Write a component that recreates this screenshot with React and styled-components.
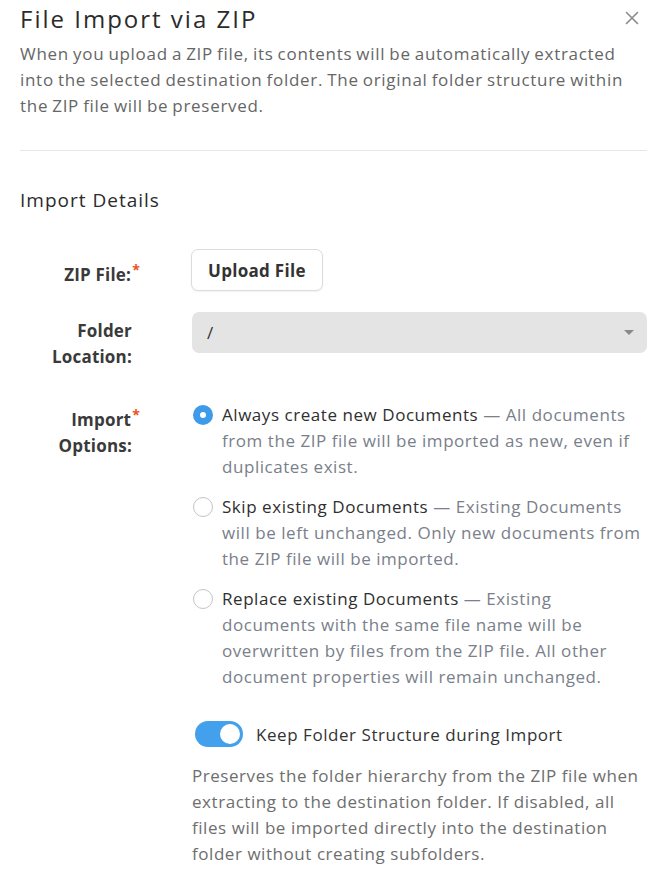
import styled, { createGlobalStyle } from "styled-components";

const GlobalStyle = createGlobalStyle`
  html, body {
    margin: 0;
    padding: 0;
    background: #ffffff;
  }
  body {
    font-family: "Open Sans", "Noto Sans", sans-serif;
    color: #333333;
  }
`;

const Dialog = styled.div`
  width: 671px;
  box-sizing: border-box;
  padding: 4px 24px 0 20px;
`;

const Header = styled.div`
  display: flex;
  align-items: center;
  justify-content: space-between;
  height: 28px;
`;

const Title = styled.h2`
  margin: 0;
  font-size: 24px;
  letter-spacing: 2px;
  font-weight: 400;
  color: #2b2b2b;
`;

const CloseButton = styled.button`
  border: none;
  background: none;
  padding: 0;
  width: 20px;
  height: 20px;
  display: flex;
  align-items: center;
  justify-content: center;
  margin-right: 5px;
  cursor: pointer;
`;

const Intro = styled.p`
  margin: 9px 0 0;
  font-size: 17px;
  letter-spacing: 0.7px;
  word-spacing: -1px;
  line-height: 26px;
  color: #666666;
`;

const Divider = styled.hr`
  border: none;
  border-top: 1px solid #e6e6e6;
  margin: 31px 0 0;
`;

const SectionTitle = styled.h3`
  margin: 36px 0 0;
  font-size: 19px;
  letter-spacing: 1px;
  font-weight: 400;
  color: #2b2b2b;
`;

const Form = styled.div`
  display: grid;
  grid-template-columns: 112px 1fr;
  column-gap: 60px;
  margin-top: 36px;
  font-size: 17px;
  letter-spacing: 0.55px;
`;

const Label = styled.div`
  text-align: right;
  font-weight: 700;
  line-height: 26px;
  color: #3a3a3a;
  letter-spacing: 0.2px;
  padding-top: ${(p) => p.$top || 0}px;
  margin-bottom: ${(p) => p.$bottom || 0}px;
`;

const Required = styled.span`
  color: #e8531f;
  font-size: 14px;
  vertical-align: 6px;
  margin-left: 1px;
  margin-right: -8px;
`;

const Cell = styled.div`
  margin-bottom: ${(p) => p.$bottom || 0}px;
`;

const UploadButton = styled.button`
  font-family: inherit;
  font-size: 17px;
  letter-spacing: 0.3px;
  font-weight: 700;
  color: #333333;
  background: #ffffff;
  border: 1px solid #dcdcdc;
  border-radius: 7px;
  height: 42px;
  padding: 0 16px;
  margin-left: -1px;
  box-shadow: 0 1px 2px rgba(0, 0, 0, 0.06);
  cursor: pointer;
`;

const Select = styled.div`
  height: 41px;
  border-radius: 7px;
  background: #e4e4e4;
  display: flex;
  align-items: center;
  justify-content: space-between;
  padding: 0 13px 0 15px;
  color: #333333;
`;

const Caret = styled.span`
  width: 0;
  height: 0;
  border-left: 5px solid transparent;
  border-right: 5px solid transparent;
  border-top: 5px solid #8a8a8a;
`;

const OptionList = styled.div`
  display: flex;
  flex-direction: column;
  gap: 14px;
`;

const Option = styled.label`
  display: flex;
  align-items: flex-start;
  gap: 9px;
  line-height: 26px;
  cursor: pointer;
`;

const Radio = styled.span`
  flex: none;
  width: 20px;
  height: 20px;
  margin-top: 3px;
  margin-left: 1px;
  box-sizing: border-box;
  border-radius: 50%;
  border: ${(p) => (p.$checked ? "none" : "1.5px solid #c4c4c4")};
  background: ${(p) => (p.$checked ? "#3d9be9" : "#ffffff")};
  display: flex;
  align-items: center;
  justify-content: center;
  &::after {
    content: "";
    display: ${(p) => (p.$checked ? "block" : "none")};
    width: 6px;
    height: 6px;
    border-radius: 50%;
    background: #ffffff;
  }
`;

const OptionTitle = styled.span`
  color: #2f2f2f;
`;

const OptionDesc = styled.span`
  color: #7a808a;
`;

const ToggleRow = styled.div`
  display: flex;
  align-items: center;
  gap: 13px;
  margin-top: 31px;
  padding-left: 3px;
  color: #333333;
`;

const Switch = styled.span`
  flex: none;
  width: 48px;
  height: 26px;
  border-radius: 13px;
  background: ${(p) => (p.$on ? "#42a0ec" : "#cccccc")};
  display: flex;
  align-items: center;
  justify-content: ${(p) => (p.$on ? "flex-end" : "flex-start")};
  padding: 0 3px;
  box-sizing: border-box;
  &::after {
    content: "";
    width: 20px;
    height: 20px;
    border-radius: 50%;
    background: #ffffff;
  }
`;

const Help = styled.p`
  margin: 16px 0 0;
  line-height: 26px;
  color: #6e6e6e;
`;

const options = [
  {
    title: "Always create new Documents",
    desc: "All documents from the ZIP file will be imported as new, even if duplicates exist.",
    checked: true,
  },
  {
    title: "Skip existing Documents",
    desc: "Existing Documents will be left unchanged. Only new documents from the ZIP file will be imported.",
  },
  {
    title: "Replace existing Documents",
    desc: "Existing documents with the same file name will be overwritten by files from the ZIP file. All other document properties will remain unchanged.",
  },
];

function CloseIcon() {
  return (
    <svg width="14" height="14" viewBox="0 0 14 14">
      <path
        d="M1.5 1.5 L12.5 12.5 M12.5 1.5 L1.5 12.5"
        stroke="#8a8a8a"
        strokeWidth="1.6"
        strokeLinecap="round"
      />
    </svg>
  );
}

export default function App() {
  return (
    <>
      <GlobalStyle />
      <Dialog>
        <Header>
          <Title>File Import via ZIP</Title>
          <CloseButton aria-label="Close">
            <CloseIcon />
          </CloseButton>
        </Header>
        <Intro>
          When you upload a ZIP file, its contents will be automatically
          extracted into the selected destination folder. The original folder
          structure within the ZIP file will be preserved.
        </Intro>
        <Divider />
        <SectionTitle>Import Details</SectionTitle>
        <Form>
          <Label $top={8} $bottom={21}>
            ZIP File:<Required>*</Required>
          </Label>
          <Cell $bottom={21}>
            <UploadButton>Upload File</UploadButton>
          </Cell>

          <Label $top={6} $bottom={32}>
            Folder
            <br />
            Location:
          </Label>
          <Cell>
            <Select>
              <span>/</span>
              <Caret />
            </Select>
          </Cell>

          <Label>
            Import<Required>*</Required>
            <br />
            Options:
          </Label>
          <Cell>
            <OptionList>
              {options.map((o) => (
                <Option key={o.title}>
                  <Radio $checked={o.checked} />
                  <span>
                    <OptionTitle>{o.title}</OptionTitle>
                    <OptionDesc> — {o.desc}</OptionDesc>
                  </span>
                </Option>
              ))}
            </OptionList>
            <ToggleRow>
              <Switch $on />
              Keep Folder Structure during Import
            </ToggleRow>
            <Help>
              Preserves the folder hierarchy from the ZIP file when extracting
              to the destination folder. If disabled, all files will be
              imported directly into the destination folder without creating
              subfolders.
            </Help>
          </Cell>
        </Form>
      </Dialog>
    </>
  );
}
